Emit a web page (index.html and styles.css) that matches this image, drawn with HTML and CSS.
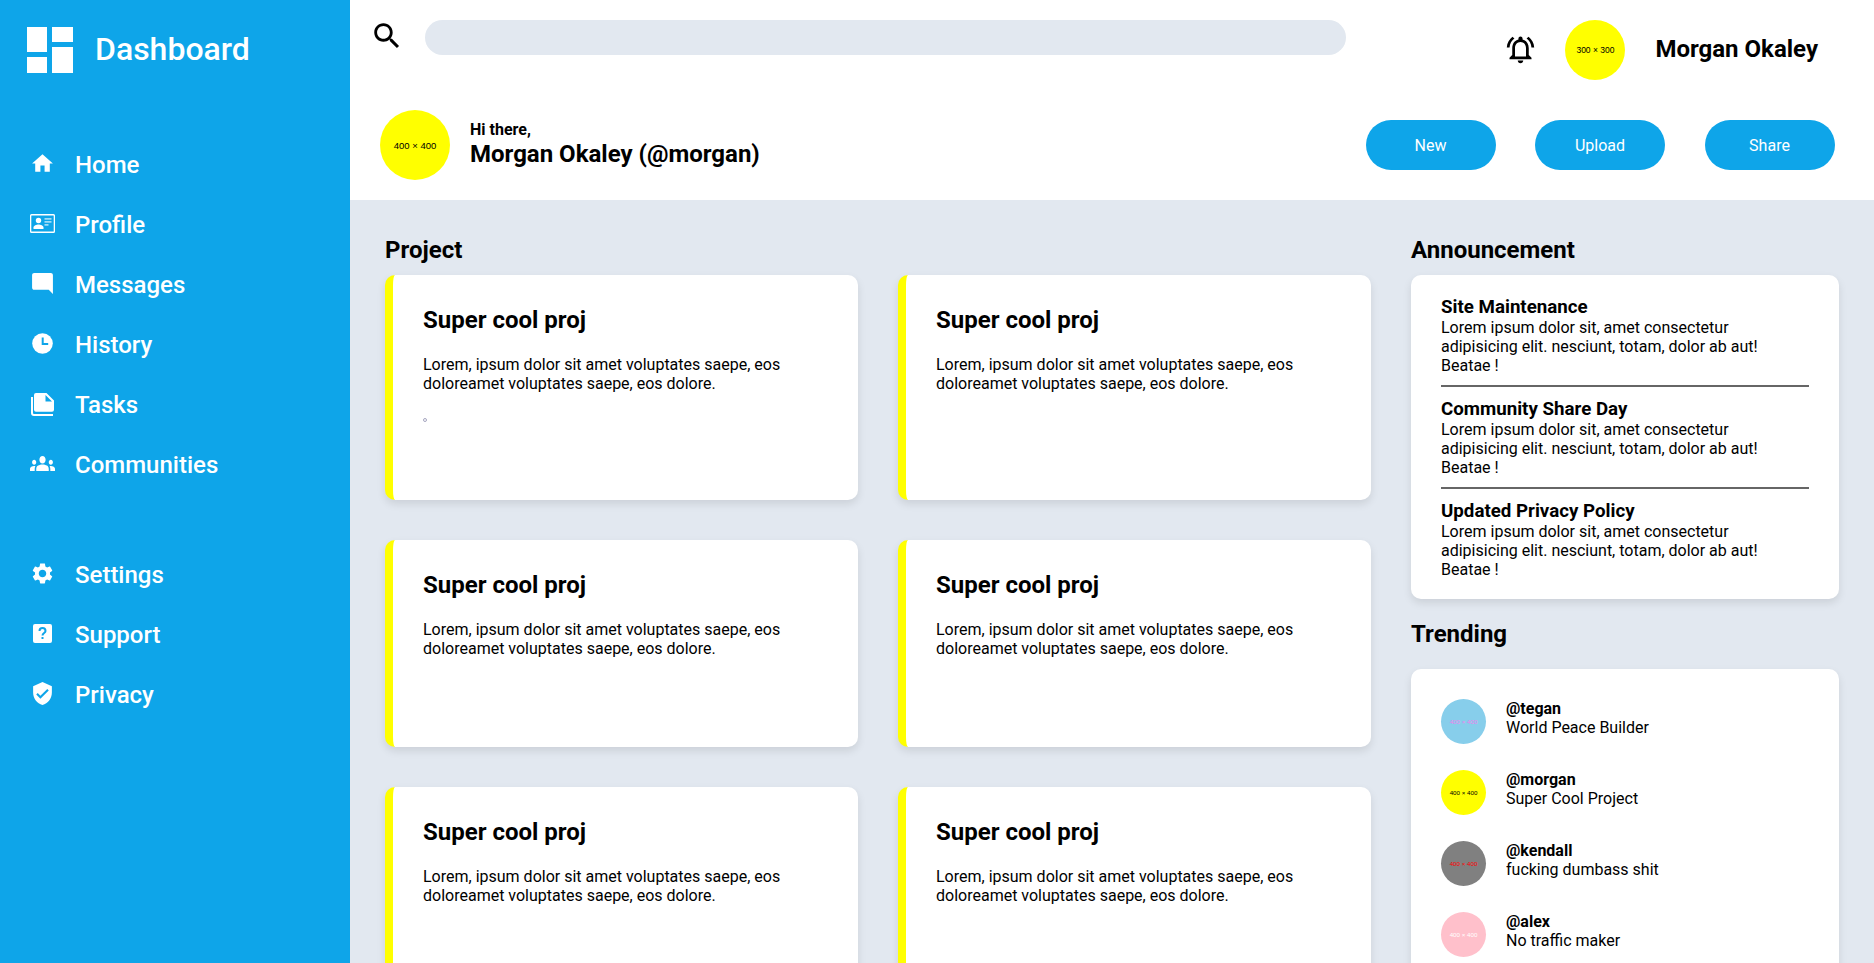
FILE: index.html
```html
<!DOCTYPE html>
<html lang="en">
<head>
  <meta charset="UTF-8" />
  <meta name="viewport" content="width=device-width, initial-scale=1.0" />
  <title>Dashboard</title>
  <link rel="stylesheet" href="styles.css">
</head>
<body>
  <aside class="sidebar">
    <div class="brand">
      <svg class="brand-logo" viewBox="0 0 46 46" fill="#fff">
        <rect x="0" y="0" width="20" height="25" />
        <rect x="25" y="0" width="21" height="15" />
        <rect x="0" y="30" width="20" height="16" />
        <rect x="25" y="20" width="21" height="26" />
      </svg>
      <span class="brand-name">Dashboard</span>
    </div>

    <nav class="nav">
      <a class="nav-item">
        <svg class="nav-icon" viewBox="0 0 24 24"><path d="M10 20v-6h4v6h5v-8h3L12 3 2 12h3v8z"/></svg>
        Home
      </a>
      <a class="nav-item">
        <svg class="nav-icon" viewBox="0 0 25 25">
          <path fill-rule="evenodd" d="M1.5 3h22A1.5 1.5 0 0 1 25 4.500v16a1.500 1.500 0 0 1-1.500 1.500h-22A1.500 1.500 0 0 1 0 20.500v-16A1.500 1.500 0 0 1 1.500 3zm.2 1.400a.4.4 0 0 0-.4.4v15.400a.4.4 0 0 0 .4.4h21.600a.4.4 0 0 0 .4-.4V4.800a.4.4 0 0 0-.4-.4z"/>
          <circle cx="8.500" cy="9.500" r="2.700"/>
          <path d="M3.500 18v-1.500c0-1.800 3-3 5-3s5 1.200 5 3V18z"/>
          <path opacity=".6" d="M14.500 7h7v1.700h-7zM14.500 10h7v1.700h-7zM14.500 13h4v1.700h-4z"/>
        </svg>
        Profile
      </a>
      <a class="nav-item">
        <svg class="nav-icon nav-icon-flip" viewBox="0 0 24 24"><path d="M20 2H4c-1.100 0-2 .9-2 2v18l4-4h14c1.100 0 2-.9 2-2V4c0-1.100-.9-2-2-2z"/></svg>
        Messages
      </a>
      <a class="nav-item">
        <svg class="nav-icon" viewBox="0 0 25 25">
          <circle cx="12.500" cy="12.500" r="10.300"/>
          <path class="icon-cut" d="M12.700 6.500v6.500h5.500" fill="none" stroke-width="2"/>
        </svg>
        History
      </a>
      <a class="nav-item">
        <svg class="nav-icon" viewBox="0 0 25 25">
          <path fill-rule="evenodd" d="M6 2h10.500L24 9.500v9.200a2 2 0 0 1-2 2H6a2 2 0 0 1-2-2V4a2 2 0 0 1 2-2zm9.500 2v6.500H22z"/>
          <path d="M1 6h2v16a1 1 0 0 0 1 1h19v2H4a3 3 0 0 1-3-3z"/>
        </svg>
        Tasks
      </a>
      <a class="nav-item">
        <svg class="nav-icon" viewBox="0 2 24 20" preserveAspectRatio="none"><path d="M12 12.750c1.630 0 3.070.39 4.240.9 1.080.48 1.760 1.560 1.760 2.730V18H6v-1.610c0-1.180.68-2.260 1.760-2.730 1.170-.52 2.610-.91 4.240-.91zM4 13c1.100 0 2-.9 2-2s-.9-2-2-2-2 .9-2 2 .9 2 2 2zm1.130 1.100c-.37-.06-.74-.1-1.130-.1-.99 0-1.930.21-2.780.58C.48 14.900 0 15.620 0 16.430V18h4.500v-1.610c0-.83.23-1.610.63-2.290zM20 13c1.100 0 2-.9 2-2s-.9-2-2-2-2 .9-2 2 .9 2 2 2zm4 3.430c0-.81-.48-1.530-1.220-1.850-.85-.37-1.790-.58-2.780-.58-.39 0-.76.04-1.130.1.4.68.63 1.460.63 2.290V18H24v-1.570zM12 6c1.660 0 3 1.340 3 3s-1.340 3-3 3-3-1.340-3-3 1.340-3 3-3z"/></svg>
        Communities
      </a>
    </nav>

    <nav class="nav nav-lower">
      <a class="nav-item">
        <svg class="nav-icon" viewBox="0 0 24 24"><path d="M19.140 12.940c.04-.3.06-.61.06-.94 0-.32-.02-.64-.07-.94l2.030-1.580c.18-.14.23-.41.12-.61l-1.920-3.320c-.12-.22-.37-.29-.59-.22l-2.390.96c-.5-.38-1.030-.7-1.620-.94l-.36-2.540c-.04-.24-.24-.41-.48-.41h-3.840c-.24 0-.43.17-.47.41l-.36 2.540c-.59.24-1.130.57-1.620.94l-2.390-.96c-.22-.08-.47 0-.59.22L2.740 8.870c-.12.21-.08.47.12.61l2.030 1.580c-.05.3-.09.63-.09.94s.02.64.07.94l-2.030 1.580c-.18.14-.23.41-.12.61l1.920 3.320c.12.22.37.29.59.22l2.390-.96c.5.38 1.030.7 1.620.94l.36 2.540c.05.24.24.41.48.41h3.840c.24 0 .44-.17.47-.41l.36-2.540c.59-.24 1.130-.56 1.620-.94l2.390.96c.22.08.47 0 .59-.22l1.920-3.320c.12-.22.07-.47-.12-.61l-2.010-1.580zM12 15.600c-1.980 0-3.600-1.620-3.600-3.600s1.620-3.600 3.600-3.600 3.600 1.620 3.600 3.600-1.620 3.600-3.600 3.600z"/></svg>
        Settings
      </a>
      <a class="nav-item">
        <svg class="nav-icon" viewBox="0 0 25 25">
          <rect x="3" y="3" width="19" height="19" rx="2"/>
          <path class="icon-cut" d="M9.500 10c0-4 6-4 6 0 0 2-3 2-3 4.500" fill="none" stroke-width="2"/>
          <rect class="icon-dot" x="11.500" y="16" width="2" height="2"/>
        </svg>
        Support
      </a>
      <a class="nav-item">
        <svg class="nav-icon" viewBox="0 0 24 24"><path d="M12 1L3 5v6c0 5.550 3.840 10.740 9 12 5.160-1.260 9-6.450 9-12V5l-9-4zm-2 16l-4-4 1.410-1.410L10 14.170l6.590-6.590L18 9l-8 8z"/></svg>
        Privacy
      </a>
    </nav>
  </aside>

  <div class="page">
    <header class="header">
      <div class="topbar">
        <svg class="search-icon" viewBox="0 0 24 24"><path d="M15.500 14h-.79l-.28-.27C15.410 12.590 16 11.110 16 9.500 16 5.910 13.090 3 9.500 3S3 5.910 3 9.500 5.910 16 9.500 16c1.610 0 3.090-.59 4.230-1.570l.27.28v.79l5 4.990L20.490 19l-4.990-5zm-6 0C7.010 14 5 11.990 5 9.500S7.010 5 9.500 5 14 7.010 14 9.500 11.990 14 9.500 14z"/></svg>
        <div class="search-bar"></div>
        <div class="user">
          <svg class="bell-icon" viewBox="0 0 24 24"><path d="M12 22c1.100 0 2-.9 2-2h-4c0 1.100.89 2 2 2zm6-6v-5c0-3.070-1.640-5.640-4.500-6.320V4c0-.83-.67-1.500-1.500-1.500s-1.500.67-1.500 1.500v.68C7.630 5.360 6 7.920 6 11v5l-2 2v1h16v-1l-2-2zm-2 1H8v-6c0-2.480 1.510-4.500 4-4.500s4 2.020 4 4.500v6z"/><path d="M7.580 4.080L6.150 2.650C3.750 4.480 2.170 7.300 2.030 10.500h2c.15-2.650 1.510-4.970 3.550-6.420zm12.390 6.420h2c-.15-3.200-1.730-6.020-4.120-7.850l-1.420 1.430c2.020 1.450 3.390 3.770 3.540 6.420z"/></svg>
          <div class="avatar avatar-top yellow">300 × 300</div>
          <span class="user-name">Morgan Okaley</span>
        </div>
      </div>
      <div class="welcome">
        <div class="avatar avatar-big yellow">400 × 400</div>
        <div class="greeting">
          <div class="greeting-hi">Hi there,</div>
          <div class="greeting-name">Morgan Okaley (@morgan)</div>
        </div>
        <div class="actions">
          <button class="btn">New</button>
          <button class="btn">Upload</button>
          <button class="btn">Share</button>
        </div>
      </div>
    </header>

    <main class="content">
      <section>
        <h2 class="section-title">Project</h2>
        <div class="projects">
          <article class="card">
            <h3>Super cool proj</h3>
            <p>Lorem, ipsum dolor sit amet voluptates saepe, eos doloreamet voluptates saepe, eos dolore.</p>
            <span class="marker"></span>
          </article>
          <article class="card">
            <h3>Super cool proj</h3>
            <p>Lorem, ipsum dolor sit amet voluptates saepe, eos doloreamet voluptates saepe, eos dolore.</p>
          </article>
          <article class="card">
            <h3>Super cool proj</h3>
            <p>Lorem, ipsum dolor sit amet voluptates saepe, eos doloreamet voluptates saepe, eos dolore.</p>
          </article>
          <article class="card">
            <h3>Super cool proj</h3>
            <p>Lorem, ipsum dolor sit amet voluptates saepe, eos doloreamet voluptates saepe, eos dolore.</p>
          </article>
          <article class="card">
            <h3>Super cool proj</h3>
            <p>Lorem, ipsum dolor sit amet voluptates saepe, eos doloreamet voluptates saepe, eos dolore.</p>
          </article>
          <article class="card">
            <h3>Super cool proj</h3>
            <p>Lorem, ipsum dolor sit amet voluptates saepe, eos doloreamet voluptates saepe, eos dolore.</p>
          </article>
        </div>
      </section>

      <section>
        <h2 class="section-title">Announcement</h2>
        <div class="panel announcements">
          <div class="notice">
            <h4>Site Maintenance</h4>
            <p>Lorem ipsum dolor sit, amet consectetur adipisicing elit. nesciunt, totam, dolor ab aut! Beatae !</p>
          </div>
          <div class="notice">
            <h4>Community Share Day</h4>
            <p>Lorem ipsum dolor sit, amet consectetur adipisicing elit. nesciunt, totam, dolor ab aut! Beatae !</p>
          </div>
          <div class="notice">
            <h4>Updated Privacy Policy</h4>
            <p>Lorem ipsum dolor sit, amet consectetur adipisicing elit. nesciunt, totam, dolor ab aut! Beatae !</p>
          </div>
        </div>

        <h2 class="section-title trending-title">Trending</h2>
        <div class="panel trending">
          <div class="trend">
            <div class="avatar avatar-small skyblue">400 × 400</div>
            <div><strong>@tegan</strong><br>World Peace Builder</div>
          </div>
          <div class="trend">
            <div class="avatar avatar-small yellow">400 × 400</div>
            <div><strong>@morgan</strong><br>Super Cool Project</div>
          </div>
          <div class="trend">
            <div class="avatar avatar-small gray">400 × 400</div>
            <div><strong>@kendall</strong><br>fucking dumbass shit</div>
          </div>
          <div class="trend">
            <div class="avatar avatar-small pink">400 × 400</div>
            <div><strong>@alex</strong><br>No traffic maker</div>
          </div>
        </div>
      </section>
    </main>
  </div>
</body>
</html>
```

FILE: styles.css
```css
* {
  box-sizing: border-box;
}
body {
  margin: 0;
  height: 100vh;
  overflow: hidden;
  display: flex;
  font-family: Roboto, "Liberation Sans", sans-serif;
  font-size: 16px;
  color: #000;
  background-color: #e2e8f0;
}

/* sidebar */
.sidebar {
  flex: 0 0 350px;
  padding-top: 27px;
  background-color: #0ea5e9;
  color: #fff;
}
.brand {
  display: flex;
  align-items: center;
  gap: 22px;
  padding-left: 27px;
}
.brand-logo {
  width: 46px;
  height: 46px;
}
.brand-name {
  font-size: 32px;
  font-weight: 500;
  margin-bottom: 2px;
}
.nav {
  margin-top: 62px;
}
.nav-lower {
  margin-top: 50px;
}
.nav-item {
  display: flex;
  align-items: center;
  gap: 20px;
  height: 60px;
  padding-left: 30px;
  font-size: 24px;
  font-weight: 500;
}
.nav-icon {
  width: 25px;
  height: 25px;
  margin-bottom: 4px;
  fill: #fff;
}
.nav-icon-flip {
  transform: scaleX(-1);
}
.icon-cut {
  stroke: #0ea5e9;
}
.icon-dot {
  fill: #0ea5e9;
}

/* header */
.page {
  flex: 1;
  min-width: 0;
}
.header {
  background-color: #fff;
}
.topbar {
  display: flex;
  align-items: flex-start;
  height: 100px;
  padding: 20px 56px 0 20px;
}
.search-icon {
  width: 34px;
  height: 34px;
  margin-top: -1px;
}
.search-bar {
  width: 921px;
  height: 35px;
  margin-left: 21px;
  border-radius: 18px;
  background-color: #e2e8f0;
}
.user {
  display: flex;
  align-items: center;
  margin-left: auto;
}
.bell-icon {
  width: 33px;
  height: 33px;
  margin-bottom: 2px;
}
.user .avatar {
  margin: 0 30px 0 28px;
}
.user-name {
  margin-bottom: 2px;
  font-size: 24px;
  font-weight: 700;
}
.avatar {
  display: flex;
  align-items: center;
  justify-content: center;
  flex: none;
  border-radius: 50%;
  font-family: "Liberation Sans", Arial, sans-serif;
}
.avatar-top {
  width: 60px;
  height: 60px;
  font-size: 8.5px;
}
.avatar-big {
  width: 70px;
  height: 70px;
  font-size: 9.5px;
}
.avatar-small {
  width: 45px;
  height: 45px;
  font-size: 6.2px;
}
.yellow {
  background-color: #ff0;
  color: #000;
}
.skyblue {
  background-color: skyblue;
  color: violet;
}
.gray {
  background-color: gray;
  color: red;
}
.pink {
  background-color: pink;
  color: #fff;
}
.welcome {
  display: flex;
  align-items: center;
  height: 100px;
  padding: 10px 39.5px 20px 30px;
}
.greeting {
  margin-left: 20px;
  margin-bottom: 3px;
}
.greeting-hi {
  margin-bottom: 1px;
  font-weight: 700;
}
.greeting-name {
  font-size: 24px;
  font-weight: 700;
}
.actions {
  display: flex;
  gap: 39.5px;
  margin-left: auto;
}
.btn {
  width: 130px;
  height: 50px;
  border: none;
  border-radius: 25px;
  background-color: #0ea5e9;
  color: #fff;
  font-family: inherit;
  font-size: 16px;
}

/* main grid */
.content {
  display: grid;
  grid-template-columns: 986px 428px;
  gap: 40px;
  padding: 36px 35px 0;
}
.section-title {
  margin: 0 0 11px;
  font-size: 24px;
  font-weight: 700;
}
.projects {
  display: grid;
  grid-template-columns: 1fr 1fr;
  gap: 40px;
}
.card {
  padding: 31px 30px 64px;
  border-left: 8px solid #ff0;
  border-radius: 10px;
  background-color: #fff;
  box-shadow: 0 4px 8px rgba(0,0,0,0.1);
}
.card h3 {
  margin: 0 0 21px;
  font-size: 24px;
  font-weight: 700;
}
.card p {
  margin: 0 0 25px;
}
.marker {
  display: block;
  width: 4px;
  height: 4px;
  margin-bottom: 14px;
  border: 1px solid #a6a6c0;
  border-radius: 50%;
}
.panel {
  border-radius: 10px;
  background-color: #fff;
  box-shadow: 0 4px 8px rgba(0,0,0,0.1);
}
.announcements {
  padding: 21px 30px 20px;
}
.notice h4 {
  margin: 0;
  font-size: 18.72px;
  font-weight: 700;
}
.notice p {
  margin: 0;
}
.notice + .notice {
  margin-top: 10px;
  padding-top: 11px;
  border-top: 2px solid #666;
}
.trending-title {
  margin-top: 21px;
  margin-bottom: 21px;
}
.trending {
  padding: 30px;
}
.trend {
  display: flex;
  align-items: flex-start;
  gap: 20px;
  margin-bottom: 26px;
}
```
